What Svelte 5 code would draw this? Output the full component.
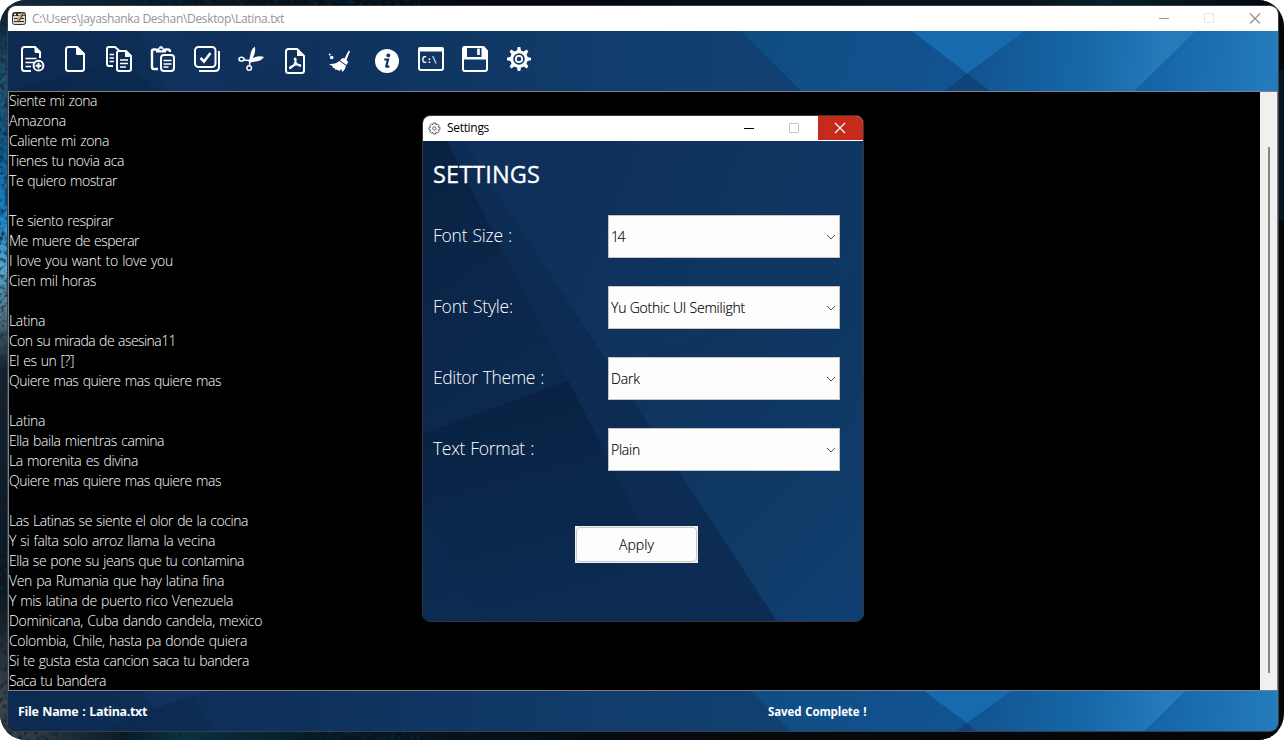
<script>
  const lines = [
    ['Siente mi zona', 88], ['Amazona', 57], ['Caliente mi zona', 100],
    ['Tienes tu novia aca', 115], ['Te quiero mostrar', 108], ['', 0],
    ['Te siento respirar', 104], ['Me muere de esperar', 130],
    ['I love you want to love you', 164], ['Cien mil horas', 87], ['', 0],
    ['Latina', 36], ['Con su mirada de asesina11', 167], ['El es un [?]', 65],
    ['Quiere mas quiere mas quiere mas', 212], ['', 0],
    ['Latina', 36], ['Ella baila mientras camina', 155], ['La morenita es divina', 129],
    ['Quiere mas quiere mas quiere mas', 212], ['', 0],
    ['Las Latinas se siente el olor de la cocina', 239],
    ['Y si falta solo arroz llama la vecina', 206],
    ['Ella se pone su jeans que tu contamina', 235],
    ['Ven pa Rumania que hay latina fina', 215],
    ['Y mis latina de puerto rico Venezuela', 224],
    ['Dominicana, Cuba dando candela, mexico', 253],
    ['Colombia, Chile, hasta pa donde quiera', 238],
    ['Si te gusta esta cancion saca tu bandera', 240],
    ['Saca tu bandera', 97]
  ];
  const fields = [
    { label: 'Font Size :', lw: 79, value: '14', vw: 13 },
    { label: 'Font Style:', lw: 80, value: 'Yu Gothic UI Semilight', vw: 134 },
    { label: 'Editor Theme :', lw: 111, value: 'Dark', vw: 29 },
    { label: 'Text Format :', lw: 101, value: 'Plain', vw: 29 }
  ];
  const teeth = [0, 45, 90, 135, 180, 225, 270, 315];

  // Tracks a run of text so that it occupies the given width.
  function fit(node, width) {
    const n = node.textContent.length;
    if (!n || !width) return;
    const apply = () => {
      node.style.letterSpacing = '0px';
      const w = node.getBoundingClientRect().width;
      node.style.letterSpacing = (width - w) / n + 'px';
    };
    apply();
    document.fonts?.ready.then(apply);
  }
</script>

<div class="desktop">
  <svg class="wallpaper" viewBox="0 0 1284 740" aria-hidden="true">
    <defs>
      <linearGradient id="strip" x1="0" y1="0" x2="0" y2="1">
        <stop offset="0" stop-color="#0b1a28" />
        <stop offset=".1" stop-color="#25506e" />
        <stop offset=".2" stop-color="#135d90" />
        <stop offset=".29" stop-color="#1a84ca" />
        <stop offset=".36" stop-color="#58a8d0" />
        <stop offset=".42" stop-color="#56788a" />
        <stop offset=".5" stop-color="#1a212a" />
        <stop offset=".8" stop-color="#0f131a" />
        <stop offset=".95" stop-color="#42474e" />
        <stop offset="1" stop-color="#2a2f36" />
      </linearGradient>
      <linearGradient id="topbar" x1="0" x2="1">
        <stop offset="0" stop-color="#152c3e" />
        <stop offset=".15" stop-color="#08131d" />
        <stop offset=".4" stop-color="#05080e" />
        <stop offset=".8" stop-color="#07141d" />
        <stop offset=".86" stop-color="#07202c" />
        <stop offset="1" stop-color="#04060b" />
      </linearGradient>
      <linearGradient id="foot" x1="0" x2="1">
        <stop offset="0" stop-color="#41464d" />
        <stop offset=".1" stop-color="#0c1820" />
        <stop offset=".14" stop-color="#0a3441" />
        <stop offset=".25" stop-color="#081820" />
        <stop offset=".5" stop-color="#050b10" />
        <stop offset="1" stop-color="#030509" />
      </linearGradient>
      <filter id="grain" x="0" y="0" width="100%" height="100%">
        <feTurbulence type="fractalNoise" baseFrequency=".22" numOctaves="3" seed="4" />
        <feColorMatrix values="0 0 0 0 0  0 0 0 0 0.02  0 0 0 0 0.05  2.4 0 0 0 -1.05" />
      </filter>
    </defs>
    <rect width="1284" height="740" fill="#04070c" />
    <rect width="1284" height="7" fill="url(#topbar)" />
    <rect y="730" width="1284" height="10" fill="url(#foot)" />
    <rect width="10" height="740" fill="url(#strip)" />
    <rect x="1276" y="70" width="8" height="150" fill="#061722" />
    <rect width="10" height="740" filter="url(#grain)" />
    <rect y="730" width="420" height="10" filter="url(#grain)" />
    <rect width="420" height="6" filter="url(#grain)" />
  </svg>

  <main class="window">
    <header class="titlebar">
      <svg class="appicon" viewBox="12 10 14 14">
        <rect x="12.5" y="11.5" width="13" height="12" rx="2" fill="#d8d8d0" stroke="#333" />
        <path d="M13 12h12v3H13z" fill="#2c2c2c" />
        <path d="M14 13.500h2M18 13.500h2M22.500 13.500h2" stroke="#f4f4f4" stroke-width="1.300" />
        <path d="M14 17.500h4M14 20.500h10M21 17.500h3" stroke="#333" stroke-width="1" />
        <path d="M17 20l5-8" stroke="#e0b13a" stroke-width="1.600" />
        <path d="M18.500 20.500l4.500-7" stroke="#1a1a1a" />
      </svg>
      <span class="path"><span use:fit={252}>C:\Users\Jayashanka Deshan\Desktop\Latina.txt</span></span>
      <svg class="controls" width="136" height="25" viewBox="1142 6 136 25" fill="none">
        <path d="M1159 18.500h10" stroke="#999" />
        <rect x="1204.500" y="13.500" width="9" height="9" rx=".5" stroke="#e6e6e6" />
        <path d="M1250 13.500l10 10M1260 13.500l-10 10" stroke="#8f8f8f" stroke-width="1.100" />
      </svg>
    </header>

    <div class="toolbar">
      <svg class="facets" viewBox="8 31 1270 60" preserveAspectRatio="none" aria-hidden="true">
        <defs>
          <linearGradient id="base" gradientUnits="userSpaceOnUse" x1="8" x2="800" y1="31" y2="31">
            <stop offset="0" stop-color="#0d2a50" /><stop offset=".45" stop-color="#0f335f" />
            <stop offset=".75" stop-color="#113c6b" /><stop offset="1" stop-color="#114172" />
          </linearGradient>
          <linearGradient id="mid" gradientUnits="userSpaceOnUse" x1="740" x2="960" y1="31" y2="91">
            <stop offset="0" stop-color="#104c81" /><stop offset="1" stop-color="#115391" />
          </linearGradient>
          <linearGradient id="beam" gradientUnits="userSpaceOnUse" x1="975" x2="1165" y1="50" y2="70">
            <stop offset="0" stop-color="#115490" /><stop offset=".6" stop-color="#1768a9" /><stop offset="1" stop-color="#267bbb" />
          </linearGradient>
          <linearGradient id="end" gradientUnits="userSpaceOnUse" x1="1150" x2="1278" y1="50" y2="60">
            <stop offset="0" stop-color="#1464a7" /><stop offset="1" stop-color="#247cbd" />
          </linearGradient>
        </defs>
        <path d="M8 31H1278V91H8z" fill="url(#base)" />
        <path d="M8 91L120 60L160 91z" fill="#0a2447" opacity=".4" />
        <path d="M138 31H180L230 91H168z" fill="#173c6c" opacity=".3" />
        <path d="M180 31H330L230 91z" fill="#143762" opacity=".2" />
        <path d="M741 31H1000V91H801z" fill="url(#mid)" />
        <path d="M912 31H1026L967 73.500z" fill="#176aad" />
        <path d="M967 73.500L991 91H945z" fill="#10437a" />
        <path d="M1025 31H1196L1135 91H990L967 73.500z" fill="url(#beam)" />
        <path d="M1196 31H1278V91H1135z" fill="url(#end)" />
      </svg>
      <nav class="tools">
        <!-- new file -->
        <svg viewBox="10 39 44 44"><path d="M31 71H24.500Q22 71 22 68.500V49.500Q22 47 24.500 47H35L40 52V58" /><path class="solid" d="M34.500 46.500L41 53H36Q34.500 53 34.500 51.500z" /><path d="M25.500 58.500H36.500M25.500 62.500H34M25.500 66.500H31" class="thin" /><circle cx="38.500" cy="65.700" r="4.900" /><path d="M38.500 62.800V68.600M35.600 65.700H41.400" /></svg>
        <!-- blank file -->
        <svg viewBox="54 39 44 44"><path d="M68.500 47H77L84 54V68.500Q84 71 81.500 71H68.500Q66 71 66 68.500V49.500Q66 47 68.500 47z" /><path class="solid" d="M76 47H78L84.500 53.500V55H77.500Q76 55 76 53.500z" /></svg>
        <!-- copy -->
        <svg viewBox="98 39 44 44"><path d="M113 66H109Q107 66 107 64V49Q107 47 109 47H115L119 50.500" /><path class="thin" d="M109.500 54.500H114M109.500 58H114M109.500 61.500H114" /><path d="M119 51H126L131 56V69Q131 71 129 71H119Q117 71 117 69V53Q117 51 119 51z" /><path class="solid" d="M125 51L131.500 57H125z" /><path class="thin" d="M120 60H128M120 63.500H128M120 67H126" /></svg>
        <!-- paste -->
        <svg viewBox="142 39 44 44"><path d="M158 69H154Q152 69 152 67V51Q152 49.500 154 49.500H156M165.500 49.500H168Q170 49.500 170 52" stroke-width="2.400" /><path class="solid" d="M156 48.500H158.500Q159 46 161 46Q163 46 163.500 48.500H166V52.500H156z" /><path class="thin" d="M159.500 49.500h3" style:stroke="#10315c" /><rect x="161" y="55" width="13" height="16" rx="3" /><path class="thin" d="M163.500 60.500H171.500M163.500 64H171.500M163.500 67H168.500" /></svg>
        <!-- select all -->
        <svg viewBox="186 39 44 44"><rect x="195" y="47" width="20.500" height="20" rx="3.500" /><path d="M219 51V67Q219 71 215 71H199" /><path d="M200.500 58L204 61.500L210.500 53" stroke-width="2.500" /></svg>
        <!-- cut -->
        <svg viewBox="230 39 44 44"><ellipse cx="241.500" cy="59.200" rx="2.500" ry="1.900" class="thin" /><circle cx="249.200" cy="68" r="2.300" class="thin" /><path d="M244 60L250 60.500M249.500 65.500L250 60" class="thin" /><path class="solid" d="M249 61L251 52Q252.500 48 255 46.500Q255.500 51 254.500 54L251.500 61zM248 61L254 57.500Q260 55.500 264 57Q261 61 256 61.500L250 62.500z" /></svg>
        <!-- pdf -->
        <svg viewBox="274 39 44 44"><path d="M288.500 49H297L304 56V70.500Q304 73 301.500 73H288.500Q286 73 286 70.500V51.500Q286 49 288.500 49z" /><path class="solid" d="M297 48.500L304.500 56H297z" /><path class="thin" d="M294.500 58.500Q296 57.500 295.800 60.500Q295 65 291 68Q289.500 69 289.700 67.500Q291.500 65.500 298 64.500Q301 64.500 300.500 66Q298 66 295.500 62z" /></svg>
        <!-- clear -->
        <svg viewBox="318 39 44 44"><path class="solid" d="M348.700 50.500L350 51.300L346.500 60L348.200 62L346.500 65L340 60.500L342.500 58L344.500 58.500zM339.200 61L346 65.800Q345.500 69 342.500 72L341 69L339.500 71L336.500 69.500L335.500 70L334.500 68L332.500 68L333 66.500L329 64Q336 64.500 339.200 61z" /><circle class="solid" cx="331.700" cy="57.500" r="1.800" /><circle class="solid" cx="329.700" cy="54.500" r="1" /></svg>
        <!-- about -->
        <svg viewBox="362 39 44 44"><circle class="solid" cx="387" cy="61" r="12" /><circle cx="388.300" cy="55.400" r="1.900" style:fill="#10345f" stroke="none" /><path d="M384.300 59.500H388L386.200 66.300Q386.200 67.300 389.300 66.200" style:stroke="#10345f" stroke-width="2.200" /></svg>
        <!-- terminal -->
        <svg viewBox="406 39 44 44"><rect x="419" y="48" width="24" height="22" rx="2" /><path class="solid" d="M418.500 47.500h25v4h-25z" /><text x="421.600" y="62.500">C:\</text></svg>
        <!-- save -->
        <svg viewBox="450 39 44 44"><path d="M465 47H483L487 51V69Q487 71 485 71H465Q463 71 463 69V49Q463 47 465 47z" /><path class="solid" d="M463 57h24v2.500h-24zM463 46.500h4v11h-4zM481.500 46.500h3l3 4v7H481.500z" /><path class="solid" d="M477.200 48.500h2.600v6.500h-2.600z" /></svg>
        <!-- settings -->
        <svg viewBox="494 39 44 44"><circle cx="519" cy="59" r="7.300" stroke-width="3" /><circle cx="519" cy="59" r="3.200" stroke-width="1.800" />{#each teeth as a}<path class="solid" d="M516.700 52L517.700 47H520.300L521.300 52z" transform="rotate({a} 519 59)" />{/each}</svg>
      </nav>
    </div>

    <section class="editor">
      <div class="text">
        {#each lines as [t, w]}
          <div class="line"><span use:fit={w}>{t}</span></div>
        {/each}
      </div>
      <div class="scroll"><div class="thumb"></div></div>
    </section>

    <footer class="status">
      <svg class="facets" viewBox="8 691 1270 40" preserveAspectRatio="none" aria-hidden="true">
        <g transform="translate(0 660)">
          <path d="M8 31H1278V91H8z" fill="url(#base)" />
          <path d="M100 71L190 34L215 71z" fill="#0a2447" opacity=".25" />
          <path d="M143 31H210L155 48z" fill="#173c6c" opacity=".35" />
          <path d="M751 31H1000V71H791z" fill="url(#mid)" />
          <path d="M924 31H1012L967 63z" fill="#176aad" />
          <path d="M967 63L977 71H957z" fill="#10437a" />
          <path d="M1011 31H1186L1145 71H977L967 63z" fill="url(#beam)" />
          <path d="M1186 31H1278V71H1145z" fill="url(#end)" />
        </g>
      </svg>
      <span class="file"><span use:fit={129}>File Name : Latina.txt</span></span>
      <span class="saved"><span use:fit={98.5}>Saved Complete !</span></span>
    </footer>
  </main>

  <div class="dialog">
    <header class="dtitle">
      <svg class="gear" viewBox="0 0 14 14" fill="none" stroke="#3b444d" stroke-width=".9">
        <path d="M5.800 1h2.400l.4 1.900 1.400-.9 1.800 1.800-1 1.500 2 .5v2.400l-2 .5 1 1.500-1.800 1.800-1.500-1-.5 2H5.700l-.5-2-1.500 1-1.700-1.800 1-1.500-2-.5V5.800l2-.5-1-1.500L3.800 2l1.500.9z" />
        <circle cx="6.900" cy="7" r="1.800" />
      </svg>
      <span class="dname"><span use:fit={42}>Settings</span></span>
      <svg class="min" width="90" height="25" viewBox="728 116 90 25" fill="none">
        <path d="M744 128.500h10" stroke="#000" />
        <rect x="789.500" y="123.500" width="9" height="9" rx=".5" stroke="#c8c8c8" />
      </svg>
      <span class="close"><svg viewBox="0 0 45 24" width="45" height="24"><path d="M17 7l10 10M27 7L17 17" stroke="#fff" stroke-width="1.100" /></svg></span>
    </header>
    <div class="body">
      <svg class="facets" viewBox="423 141 440 480" preserveAspectRatio="none" aria-hidden="true">
        <defs>
          <linearGradient id="dl" gradientUnits="userSpaceOnUse" x1="423" y1="141" x2="600" y2="400">
            <stop offset="0" stop-color="#0a2243" /><stop offset="1" stop-color="#0c2a50" />
          </linearGradient>
          <linearGradient id="dr" gradientUnits="userSpaceOnUse" x1="500" y1="250" x2="863" y2="400">
            <stop offset="0" stop-color="#0e305a" /><stop offset="1" stop-color="#103966" />
          </linearGradient>
          <linearGradient id="dlow" gradientUnits="userSpaceOnUse" x1="620" y1="380" x2="863" y2="621">
            <stop offset="0" stop-color="#0f335e" /><stop offset=".6" stop-color="#103a67" /><stop offset="1" stop-color="#103f72" />
          </linearGradient>
          <linearGradient id="ddark" gradientUnits="userSpaceOnUse" x1="500" y1="400" x2="560" y2="621">
            <stop offset="0" stop-color="#092243" /><stop offset="1" stop-color="#0c2c52" />
          </linearGradient>
        </defs>
        <path d="M423 141H863V621H423z" fill="url(#dl)" />
        <path d="M423 433L570 380L690 621H423z" fill="url(#ddark)" />
        <path d="M423 500L482 621H423z" fill="#0d2d55" opacity=".3" />
        <path d="M447 141H463L777 621H690z" fill="#0d2c53" />
        <path d="M463 141H863V621H777z" fill="url(#dr)" />
        <path d="M612 368L863 272V621H777z" fill="url(#dlow)" />
      </svg>
      <h1><span use:fit={107}>SETTINGS</span></h1>
      <div class="form">
        {#each fields as f}
          <div class="row">
            <span class="label"><span use:fit={f.lw}>{f.label}</span></span>
            <div class="combo">
              <span use:fit={f.vw}>{f.value}</span>
              <svg width="10" height="6" viewBox="0 0 10 6"><path d="M1 1l4 4 4-4" fill="none" stroke="#555" stroke-width="1" /></svg>
            </div>
          </div>
        {/each}
      </div>
      <button class="apply"><span class="face"><span use:fit={35}>Apply</span></span></button>
    </div>
  </div>
</div>

<style>
  :global(body) { background: #fff; overflow: hidden; }
  .desktop { position: relative; box-sizing: border-box; width: 1284px; height: 740px; padding: 5px 5px 8px 7px; border-radius: 26px; overflow: hidden; font-family: "Open Sans", "Noto Sans", sans-serif; }
  .wallpaper { position: absolute; inset: 0; width: 1284px; height: 740px; }
  .window { position: relative; box-sizing: border-box; width: 1272px; height: 727px; border: 1px solid #3a3d42; border-radius: 9px; overflow: hidden; display: flex; flex-direction: column; background: #000; }
  .titlebar { height: 25px; flex: none; background: #fff; display: flex; align-items: center; padding-left: 4px; }
  .appicon { width: 14px; height: 14px; margin-top: -1px; }
  .path { flex: 1; margin-left: 6px; font-size: 12px; line-height: 24px; color: #949494; white-space: nowrap; }
  .controls { flex: none; }
  .toolbar, .status { position: relative; flex: none; }
  .toolbar { height: 60px; }
  .facets { position: absolute; inset: 0; width: 100%; height: 100%; z-index: 0; }
  .tools { position: relative; display: flex; padding: 8px 0 0 2px; }
  .tools svg { width: 44px; height: 44px; fill: none; stroke: #fff; stroke-width: 2; overflow: visible; }
  .tools .thin { stroke-width: 1.5; }
  .tools .solid { fill: #fff; stroke: none; }
  .tools text { fill: #fff; stroke: none; font: bold 8.500px "DejaVu Sans Mono", monospace; }
  .editor { flex: none; height: 598px; border: 1px solid #7d8187; display: flex; background: #000; }
  .text { flex: 1; color: #fff; font-size: 14px; font-weight: 300; word-spacing: 1px; line-height: 20px; white-space: pre; margin-top: -1px; overflow: hidden; }
  .line { height: 20px; }
  .scroll { width: 17px; background: #f0f0f0; display: flex; justify-content: center; padding-top: 55px; box-sizing: border-box; }
  .thumb { width: 2px; height: 526px; background: #868686; }
  .status { height: 40px; display: flex; align-items: center; color: #fff; font-weight: 700; white-space: nowrap; }
  .file, .saved { position: relative; word-spacing: 1px; }
  .file { width: 750px; margin-left: 10px; font-size: 12.500px; }
  .saved { font-size: 11.500px; }
  .dialog { position: absolute; left: 422px; top: 115px; width: 442px; height: 507px; box-sizing: border-box; border: 1px solid #33363b; border-radius: 8px; overflow: hidden; display: flex; flex-direction: column; }
  .dtitle { height: 25px; flex: none; background: #fff; display: flex; align-items: center; padding-left: 5px; }
  .gear { width: 13px; height: 13px; margin-top: -1px; }
  .dname { flex: 1; margin-left: 6px; font-size: 12px; line-height: 24px; color: #000; margin-top: -1px; }
  .close { width: 45px; height: 24px; background: #c42b1c; align-self: flex-start; }
  .close svg { display: block; }
  .body { flex: 1; position: relative; color: #fff; display: flex; flex-direction: column; padding-left: 10px; }
  h1 { position: relative; margin: 15px 0 0; height: 37px; line-height: 36px; font-size: 23.500px; font-weight: 400; -webkit-text-stroke: .3px #fff; }
  .form { position: relative; display: grid; gap: 28px; margin-top: 22px; }
  .row { display: grid; grid-template-columns: 175px 232px; height: 43px; align-items: center; }
  .label { font-size: 17.500px; font-weight: 300; word-spacing: 1px; line-height: 43px; white-space: nowrap; margin-top: -2px; }
  .combo { box-sizing: border-box; height: 43px; background: #fdfdfd; border: 1px solid #c4c4c4; color: #000; font-size: 14px; font-weight: 300; -webkit-text-stroke: .15px #000; display: flex; align-items: center; justify-content: space-between; padding: 0 3px 0 2px; white-space: nowrap; }
  .apply { position: relative; margin: 55px 0 0 142px; width: 123px; height: 37px; padding: 1px; border: 0; background: #f0f0f0; font-family: inherit; font-size: 14px; font-weight: 300; -webkit-text-stroke: .15px #000; color: #000; }
  .face { display: flex; box-sizing: border-box; width: 121px; height: 35px; align-items: center; justify-content: center; border: 1px solid #c8c8c8; border-radius: 4px; background: #fdfdfd; }
</style>
